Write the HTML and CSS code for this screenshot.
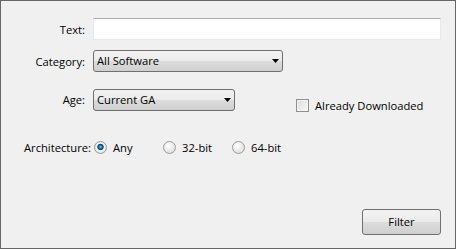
FILE: index.html
```html
<!DOCTYPE html>
<html lang="en">
<head>
  <meta charset="UTF-8">
  <title>Filter</title>
  <link rel="stylesheet" href="styles.css">
</head>
<body>
  <div class="window">
    <div class="row row-text">
      <label class="label" for="text">Text:</label>
      <input type="text" id="text" class="textbox">
    </div>

    <div class="row row-category">
      <label class="label" for="category">Category:</label>
      <div class="combo combo-category">
        <select id="category">
          <option>All Software</option>
        </select>
        <svg class="arrow" width="7" height="4" viewBox="0 0 7 4"><path d="M0 0H7L3.5 4Z" fill="#000"/></svg>
      </div>
    </div>

    <div class="row row-age">
      <label class="label" for="age">Age:</label>
      <div class="combo combo-age">
        <select id="age">
          <option>Current GA</option>
        </select>
        <svg class="arrow" width="7" height="4" viewBox="0 0 7 4"><path d="M0 0H7L3.5 4Z" fill="#000"/></svg>
      </div>
      <label class="check">
        <input type="checkbox">
        <span>Already Downloaded</span>
      </label>
    </div>

    <div class="row row-arch">
      <span class="label label-arch">Architecture:</span>
      <label class="radio radio-any"><input type="radio" name="arch" checked><span>Any</span></label>
      <label class="radio radio-32"><input type="radio" name="arch"><span>32-bit</span></label>
      <label class="radio"><input type="radio" name="arch"><span>64-bit</span></label>
    </div>

    <div class="actions">
      <button type="button" class="button">Filter</button>
    </div>
  </div>
</body>
</html>
```

FILE: styles.css
```css
* {
  box-sizing: border-box;
}
body {
  margin: 0;
  font-family: "Open Sans", "Noto Sans", sans-serif;
  font-size: 11.2px;
  color: #000;
}
.window {
  width: 456px;
  height: 249px;
  border: 1px solid #666;
  background-color: #f0f0f0;
  display: flex;
  flex-direction: column;
  padding: 17px 14px 13px 0;
}
.row {
  display: flex;
  align-items: center;
}
.label {
  width: 84px;
  text-align: right;
  margin-right: 8px;
  white-space: nowrap;
}
.textbox {
  width: 348px;
  height: 22px;
  border: 1px solid #e3e9ef;
  border-top-color: #abadb3;
  border-radius: 1px;
  background: #fff;
  font: inherit;
  outline: none;
}
.row-category {
  margin-top: 10px;
}
.row-age {
  margin-top: 17px;
  align-items: flex-start;
}
.row-age .label {
  line-height: 22px;
}
.combo {
  position: relative;
  height: 22px;
}
.combo-category {
  width: 190px;
}
.combo-age {
  width: 142px;
}
.combo select {
  appearance: none;
  -webkit-appearance: none;
  width: 100%;
  height: 100%;
  margin: 0;
  border: 1px solid #707070;
  border-radius: 3px;
  padding: 0 0 1px 3px;
  font: inherit;
  color: #000;
  background: linear-gradient(#f2f2f2, #ebebeb 50%, #dddddd 50%, #cfcfcf);
  outline: none;
}
.combo .arrow {
  position: absolute;
  right: 4px;
  top: 9px;
  pointer-events: none;
}
.check {
  display: flex;
  align-items: center;
  height: 13px;
  margin-left: 61px;
  margin-top: 10px;
}
.check input {
  appearance: none;
  -webkit-appearance: none;
  width: 13px;
  height: 13px;
  margin: 0 6px 0 0;
  border: 1px solid #8f8f8f;
  background: linear-gradient(135deg, #dcdcdc, #f8f8f8);
  box-shadow: inset 0 0 0 1px #f4f4f4;
}
.row-arch {
  margin-top: 27px;
  height: 17px;
}
.label-arch {
  width: 70px;
  margin-left: 23px;
  margin-right: 0;
  text-align: left;
}
.radio {
  display: flex;
  align-items: center;
}
.radio input {
  appearance: none;
  -webkit-appearance: none;
  width: 13px;
  height: 13px;
  margin: 0 6px 0 0;
  border: 1px solid #9a9a9a;
  border-radius: 50%;
  background: radial-gradient(circle at 40% 35%, #ffffff, #d6d6d6);
}
.radio input:checked {
  background: radial-gradient(circle at 50% 45%, #6fd0f7 0, #1b7bb3 1.5px, #0b3f66 2.8px, #f4f4f4 3.6px, #e0e0e0 6px);
}
.radio-any {
  width: 69px;
}
.radio-32 {
  width: 69px;
}
.actions {
  margin-top: auto;
  display: flex;
  justify-content: flex-end;
}
.button {
  width: 79px;
  height: 26px;
  border: 1px solid #707070;
  border-radius: 3px;
  background: linear-gradient(#f2f2f2, #ebebeb 50%, #dddddd 50%, #cfcfcf);
  font: inherit;
  color: #000;
  padding: 0 0 2px;
}
```
